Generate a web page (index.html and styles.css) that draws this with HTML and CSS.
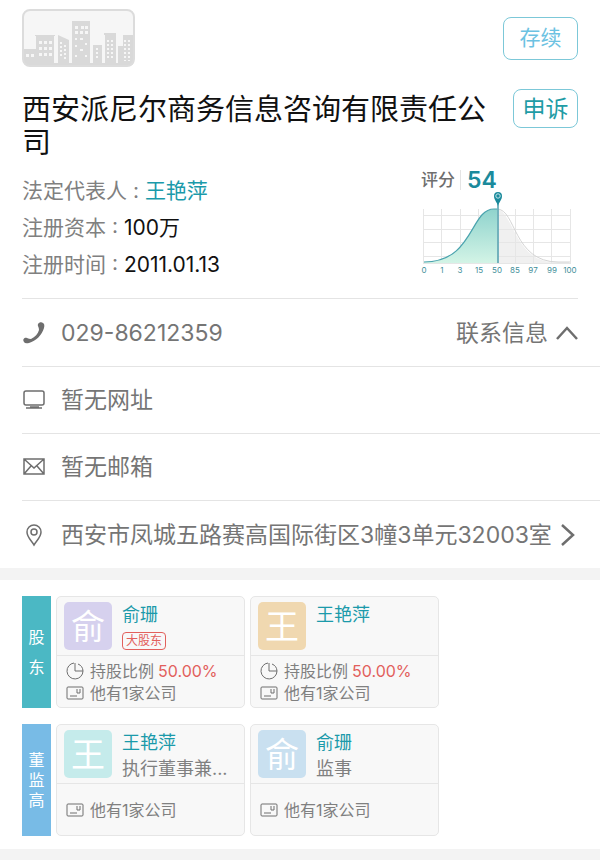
FILE: index.html
```html
<!DOCTYPE html>
<html lang="zh-CN">
<head>
    <meta charset="UTF-8">
    <meta name="viewport" content="width=device-width, initial-scale=1.0">
    <title>西安派尼尔商务信息咨询有限责任公司</title>
    <link rel="stylesheet" href="styles.css">
</head>
<body>
    <header class="company">
        <div class="company-top">
            <svg class="logo" viewBox="0 0 113 58">
                <rect x="1" y="1" width="111" height="56" rx="7" fill="#f6f6f6"/>
                <path fill="#d9d9d9" d="M1 40h13V27h-1v-1h20v1h-1v27h4V26l11 5v23h3V12h18v42h3V36h9v18h3V26h-1v-2h12v30h2V37h5V26h11v27q-1 4-6 4H8q-6 0-7-6z"/>
                <path fill="#f6f6f6" d="M4 45h3v3H4zm5 0h3v3H9zm8-13h3v3h-3zm5 0h3v3h-3zm5 0h3v3h-3zm-10 6h3v3h-3zm5 0h3v3h-3zm5 0h3v3h-3zm-10 6h3v3h-3zm5 0h3v3h-3zm5 0h3v3h-3zM53 17h3v3h-3zm6 0h3v3h-3zm4 0h3v3h-3zm-10 5h3v3h-3zm5 0h3v3h-3zm5 0h3v3h-3zm-10 7h2v2h-2zm5 0h3v2h-3zm5 5h2v2h-2zm-10 2h2v2h-2zm5 4h3v2h-3zm-5 6h2v2h-2zm10 0h2v2h-2z"/>
                <path stroke="#f6f6f6" stroke-width="2" stroke-dasharray="2 2" fill="none" d="M39 33v14M43 36v14M75 39v10M86 31v20M90 31v20M103 31v21M107 31v21"/>
                <rect x="1" y="1" width="111" height="56" rx="7" fill="none" stroke="#dcdcdc" stroke-width="2"/>
            </svg>
            <button class="tag tag-status">存续</button>
        </div>
        <div class="company-title">
            <h1>西安派尼尔商务信息咨询有限责任公司</h1>
            <button class="tag tag-appeal">申诉</button>
        </div>
        <div class="company-info">
            <ul class="facts">
                <li>法定代表人 : <a href="#">王艳萍</a></li>
                <li>注册资本 : <b>100万</b></li>
                <li>注册时间 : <b>2011.01.13</b></li>
            </ul>
            <div class="score">
                <p class="score-title"><span>评分</span><strong>54</strong></p>
                <svg class="chart" viewBox="0 0 160 84">
                    <defs>
                        <linearGradient id="fill" x1="0" y1="0" x2="0" y2="1">
                            <stop offset="0" stop-color="#8fd3cd"/>
                            <stop offset="1" stop-color="#d3f4e6"/>
                        </linearGradient>
                    </defs>
                    <path d="M76 17C93 17 94 70 134 70H149V71H76z" fill="#f0f0f0"/>
                    <path d="M3.500 17V71M21.500 17V71M40.500 17V71M58.500 17V71M77.500 17V71M95.500 17V71M113.500 17V71M131.500 17V71M150.500 17V71M3 23.500H151M3 37.500H151M3 50.500H151M3 64.500H151M3 71.500H151" stroke="#e6e6e6" fill="none"/>
                    <path d="M4 70C54 70 50 17 74 17H77V71H4z" fill="url(#fill)"/>
                    <path d="M77 17C96 17 93 70 138 70H150" stroke="#d4d4d4" fill="none"/>
                    <path d="M4 70C54 70 50 17 74 17H77" stroke="#4aa3ae" stroke-width="1.200" fill="none"/>
                    <path d="M78 10V71" stroke="#4b9fae" stroke-width="1.500"/>
                    <path d="M78 14C77 10 74 8 74 4a4 4 0 0 1 8 0C82 8 79 10 78 14z" fill="#1b8a9c"/>
                    <circle cx="78" cy="4" r="2.200" fill="none" stroke="#c5e6ea"/>
                    <g class="ticks">
                        <text x="4" y="81">0</text>
                        <text x="22" y="81">1</text>
                        <text x="40" y="81">3</text>
                        <text x="59" y="81">15</text>
                        <text x="77" y="81">50</text>
                        <text x="95" y="81">85</text>
                        <text x="113" y="81">97</text>
                        <text x="132" y="81">99</text>
                        <text x="150" y="81">100</text>
                    </g>
                </svg>
            </div>
        </div>
    </header>

    <section class="contact">
        <div class="row">
            <svg class="icon" viewBox="0 0 24 24"><path d="M16 5C15 2 19 0 21 2q2 1 1 5C20 14 14 20 7 22q-4 1-5-1c-2-3 1-5 3-4q2 1 4 1c4-2 7-5 8-9q0-2-1-4z" fill="#6e6e6e"/></svg>
            <span class="row-text">029-86212359</span>
            <button class="toggle">联系信息
                <svg class="chevron" viewBox="0 0 22 22"><path d="M1 17L11 6l10 11"/></svg>
            </button>
        </div>
        <div class="row">
            <svg class="icon line" viewBox="0 0 24 24"><rect x="2" y="3" width="20" height="14" rx="2"/><path d="M8 19h9M4 20h16"/></svg>
            <span class="row-text">暂无网址</span>
        </div>
        <div class="row">
            <svg class="icon line" viewBox="0 0 24 24"><path d="M2 4h20v15H2zM2 4l10 9 10-9M2 19l7-8M22 19l-7-8"/></svg>
            <span class="row-text">暂无邮箱</span>
        </div>
        <a class="row" href="#">
            <svg class="icon line" viewBox="0 0 24 24"><path d="M12 22C9 17 5 14 5 9a7 7 0 0 1 14 0C19 14 15 17 12 22z"/><circle cx="12" cy="9" r="3"/></svg>
            <span class="row-text">西安市凤城五路赛高国际街区3幢3单元32003室</span>
            <svg class="chevron" viewBox="0 0 22 22"><path d="M6 1l11 10L6 21"/></svg>
        </a>
    </section>

    <main class="people">
        <section class="group">
            <h2 class="group-name shareholders">股<br>东</h2>
            <article class="card">
                <div class="card-head">
                    <div class="avatar purple">俞</div>
                    <div class="who"><a href="#">俞珊</a><span class="badge">大股东</span></div>
                </div>
                <div class="card-body">
                    <p><svg class="mini" viewBox="0 0 18 18"><path d="M8 1a8 8 0 1 0 9 8M9 1v8h8a8 8 0 0 0-5-7"/></svg>持股比例 <em>50.00%</em></p>
                    <p><svg class="mini" viewBox="0 0 18 18"><rect x="1" y="3" width="16" height="12" rx="1"/><path d="M4 12h7M11 5v4h3V5"/></svg>他有1家公司</p>
                </div>
            </article>
            <article class="card">
                <div class="card-head">
                    <div class="avatar sand">王</div>
                    <div class="who"><a href="#">王艳萍</a></div>
                </div>
                <div class="card-body">
                    <p><svg class="mini" viewBox="0 0 18 18"><path d="M8 1a8 8 0 1 0 9 8M9 1v8h8a8 8 0 0 0-5-7"/></svg>持股比例 <em>50.00%</em></p>
                    <p><svg class="mini" viewBox="0 0 18 18"><rect x="1" y="3" width="16" height="12" rx="1"/><path d="M4 12h7M11 5v4h3V5"/></svg>他有1家公司</p>
                </div>
            </article>
        </section>
        <section class="group">
            <h2 class="group-name managers">董<br>监<br>高</h2>
            <article class="card">
                <div class="card-head">
                    <div class="avatar mint">王</div>
                    <div class="who"><a href="#">王艳萍</a><span class="job">执行董事兼...</span></div>
                </div>
                <div class="card-body">
                    <p><svg class="mini" viewBox="0 0 18 18"><rect x="1" y="3" width="16" height="12" rx="1"/><path d="M4 12h7M11 5v4h3V5"/></svg>他有1家公司</p>
                </div>
            </article>
            <article class="card">
                <div class="card-head">
                    <div class="avatar blue">俞</div>
                    <div class="who"><a href="#">俞珊</a><span class="job">监事</span></div>
                </div>
                <div class="card-body">
                    <p><svg class="mini" viewBox="0 0 18 18"><rect x="1" y="3" width="16" height="12" rx="1"/><path d="M4 12h7M11 5v4h3V5"/></svg>他有1家公司</p>
                </div>
            </article>
        </section>
    </main>
</body>
</html>
```
FILE: styles.css
```css
* {
    margin: 0;
    padding: 0;
    box-sizing: border-box;
    font-family: Inter, "Noto Sans CJK SC", sans-serif;
}
body {
    background: #f3f3f3;
    color: #6e6e6e;
}
a {
    color: #1b9aaa;
    text-decoration: none;
}
ul {
    list-style: none;
}
svg {
    display: block;
    flex: none;
}
button {
    background: none;
    border: none;
    cursor: pointer;
}
.company {
    background: #fff;
    padding: 9px 22px 0;
}
.company-top,
.company-title,
.company-info {
    display: flex;
    justify-content: space-between;
}
.company-top {
    align-items: center;
}
.logo {
    width: 113px;
    height: 58px;
}
.tag {
    flex: none;
    border: 1px solid #7cc8d8;
    border-radius: 8px;
    line-height: 24px;
}
.tag-status {
    width: 75px;
    height: 43px;
    color: #6cc2e2;
    font-size: 21px;
}
.tag-appeal {
    width: 65px;
    height: 39px;
    color: #1f9ca5;
    font-size: 23px;
}
.company-title {
    padding-top: 22px;
    gap: 20px;
}
h1 {
    padding-top: 4px;
    color: #111;
    font-size: 29px;
    font-weight: 400;
    line-height: 33px;
}
.company-info {
    padding-top: 13px;
    height: 140px;
    border-bottom: 1px solid #e4e4e4;
}
.facts {
    font-size: 21px;
    line-height: 37px;
    color: #808080;
}
.facts b {
    color: #111;
    font-weight: 400;
}
.score {
    width: 158px;
}
.score-title {
    display: flex;
    align-items: center;
    height: 16px;
    margin-bottom: 4px;
    gap: 5px;
    padding-left: 1px;
    font-size: 17px;
    font-weight: 500;
    line-height: 20px;
}
.score-title strong {
    padding-left: 6px;
    border-left: 1px solid #e4e4e4;
    color: #1b8a9c;
    font-size: 23px;
    font-weight: 600;
}
.chart {
    width: 160px;
    height: 84px;
    overflow: visible;
}
.ticks {
    fill: #3f8e99;
    font-size: 8px;
    text-anchor: middle;
}
.contact {
    background: #fff;
    padding: 1px 0 0 22px;
}
.row {
    display: flex;
    align-items: center;
    height: 67px;
    padding-right: 22px;
    border-bottom: 1px solid #e4e4e4;
    color: #757575;
    font-size: 23px;
    line-height: 30px;
}
.row:last-child {
    border-bottom: none;
}
.row-text {
    flex: 1;
    padding-left: 15px;
    white-space: nowrap;
}
.icon {
    width: 24px;
    height: 24px;
}
.line,
.chevron,
.mini {
    fill: none;
    stroke: #6e6e6e;
    stroke-width: 1.5;
}
.chevron {
    width: 22px;
    height: 22px;
    stroke-width: 2.5;
}
.toggle {
    display: flex;
    align-items: center;
    gap: 8px;
    color: #757575;
    font-size: 23px;
    line-height: 30px;
}
.people {
    display: flex;
    flex-direction: column;
    gap: 16px;
    margin-top: 12px;
    padding: 16px 22px 13px;
    background: #fff;
}
.group {
    display: flex;
    gap: 5px;
}
.group-name {
    display: flex;
    align-items: center;
    justify-content: center;
    width: 29px;
    color: #fff;
    font-size: 16px;
    font-weight: 400;
}
.shareholders {
    background: #4bb8c4;
    line-height: 30px;
}
.managers {
    background: #78bbe6;
    line-height: 20px;
}
.card {
    width: 189px;
    height: 112px;
    display: flex;
    flex-direction: column;
    background: #f8f8f8;
    border: 1px solid #e6e6e6;
    border-radius: 5px;
}
.card-head {
    display: flex;
    gap: 10px;
    height: 59px;
    padding: 5px 7px;
    border-bottom: 1px solid #e6e6e6;
}
.avatar {
    flex: none;
    width: 48px;
    height: 48px;
    border-radius: 5px;
    color: #fff;
    font-size: 34px;
    line-height: 50px;
    text-align: center;
}
.purple {
    background: #d6d1ee;
}
.sand {
    background: #f0d8b0;
}
.mint {
    background: #c5ebeb;
}
.blue {
    background: #c9e0f0;
}
.who {
    display: flex;
    flex-direction: column;
    align-items: flex-start;
    font-size: 18px;
    line-height: 26px;
    white-space: nowrap;
}
.job {
    color: #808080;
}
.badge {
    margin-top: 4px;
    padding: 0 3px;
    border: 1px solid #e2605c;
    border-radius: 4px;
    color: #e2605c;
    font-size: 12px;
    line-height: 16px;
}
.card-body {
    flex: 1;
    display: flex;
    flex-direction: column;
    justify-content: center;
    padding: 1px 0 0 9px;
    color: #808080;
    font-size: 16px;
    line-height: 22px;
}
.card-body p {
    display: flex;
    align-items: center;
}
.card-body em {
    padding-left: 4px;
    color: #e2605c;
    font-style: normal;
}
.mini {
    width: 18px;
    height: 18px;
    margin-right: 6px;
    stroke-width: 1;
}
```
